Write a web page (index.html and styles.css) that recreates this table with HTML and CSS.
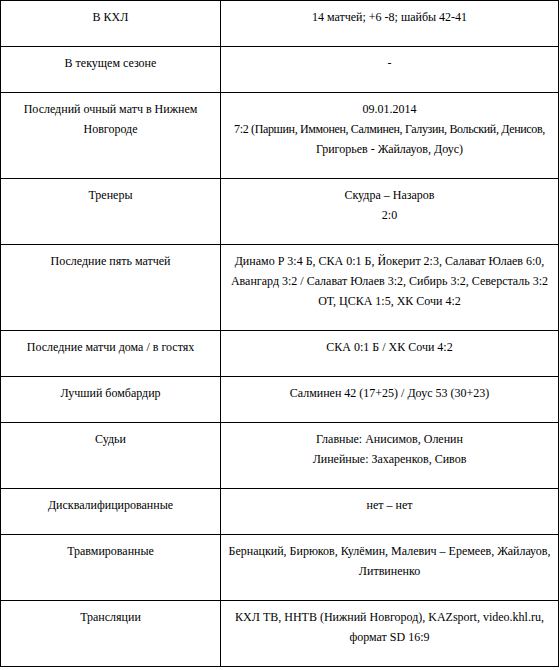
FILE: index.html
```html
<!DOCTYPE html>
<html lang="ru">
<head>
<meta charset="utf-8">
<title>Статистика встреч</title>
<link rel="stylesheet" href="styles.css">
</head>
<body>
<table class="stats">
  <tr><td class="label">В КХЛ</td><td class="value">14 матчей; +6 -8; шайбы 42-41</td></tr>
  <tr><td class="label">В текущем сезоне</td><td class="value">-</td></tr>
  <tr><td class="label">Последний очный матч в Нижнем Новгороде</td><td class="value">09.01.2014<br><span class="tight">7:2 (Паршин, Иммонен, Салминен, Галузин, Вольский, Денисов,</span><br>Григорьев - Жайлауов, Доус)</td></tr>
  <tr><td class="label">Тренеры</td><td class="value">Скудра – Назаров<br>2:0</td></tr>
  <tr><td class="label">Последние пять матчей</td><td class="value">Динамо Р 3:4 Б, СКА 0:1 Б, Йокерит 2:3, Салават Юлаев 6:0, Авангард 3:2 / Салават Юлаев 3:2, Сибирь 3:2, Северсталь 3:2 ОТ, ЦСКА 1:5, ХК Сочи 4:2</td></tr>
  <tr><td class="label">Последние матчи дома / в гостях</td><td class="value">СКА 0:1 Б / ХК Сочи 4:2</td></tr>
  <tr><td class="label">Лучший бомбардир</td><td class="value">Салминен 42 (17+25) / Доус 53 (30+23)</td></tr>
  <tr><td class="label">Судьи</td><td class="value">Главные: Анисимов, Оленин<br>Линейные: Захаренков, Сивов</td></tr>
  <tr><td class="label">Дисквалифицированные</td><td class="value">нет – нет</td></tr>
  <tr><td class="label">Травмированные</td><td class="value">Бернацкий, Бирюков, Кулёмин, Малевич – Еремеев, Жайлауов, Литвиненко</td></tr>
  <tr><td class="label">Трансляции</td><td class="value">КХЛ ТВ, ННТВ (Нижний Новгород), KAZsport, video.khl.ru, формат SD 16:9</td></tr>
</table>
</body>
</html>
```

FILE: styles.css
```css
html, body {
  margin: 0;
  padding: 0;
  background: #ffffff;
}

.stats {
  border-collapse: collapse;
  width: 559px;
  table-layout: fixed;
  font-family: "Times New Roman", "Liberation Serif", "DejaVu Serif", serif;
  font-size: 12px;
  line-height: 20px;
  color: #000000;
}

.stats td {
  border: 1px solid #000000;
  padding: 6px 5px 19px;
  text-align: center;
  vertical-align: top;
}

.stats .label {
  width: 209px;
}

.stats .tight {
  white-space: nowrap;
  letter-spacing: -0.35px;
}
```
